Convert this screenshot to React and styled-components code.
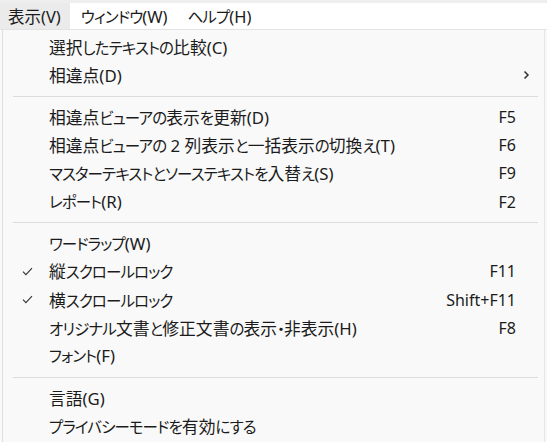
import React from 'react';
import styled, { createGlobalStyle } from 'styled-components';

const GlobalStyle = createGlobalStyle`
  html, body {
    margin: 0;
    padding: 0;
    background: #f9f9f9;
  }
  body {
    font-family: "Noto Sans", "Noto Sans CJK JP", sans-serif;
    color: #1b1b1b;
    overflow: hidden;
  }
`;

const MenuBar = styled.div`
  display: flex;
  height: 26px;
  border-top: 3px solid #eeeeee;
  border-bottom: 1px solid #e3e3e3;
  background: #ffffff;
`;

const BarItem = styled.div`
  display: flex;
  align-items: center;
  padding: 0 9px 0 8px;
  margin-right: 3px;
  font-size: 16.5px;
  white-space: nowrap;
  background: ${p => (p.open ? '#ebebeb' : 'transparent')};
`;

const Dropdown = styled.div`
  margin-left: 2px;
  width: 541px;
  height: 420px;
  border-left: 1px solid #dedede;
  border-right: 1px solid #e6e6e6;
  background: #f9f9f9;
  padding-top: 3px;
`;

const Row = styled.div`
  display: grid;
  grid-template-columns: 46px 1fr auto 28px;
  align-items: center;
  height: 28.2px;
  font-size: 16.8px;
`;

const Check = styled.div`
  display: flex;
  justify-content: center;
  padding-left: 2px;
`;

const Label = styled.span`
  white-space: nowrap;
`;

/* kana runs are set narrower than kanji, like the UI font of the menu */
const Kana = styled.span`
  font-size: 15.5px;
  font-feature-settings: "palt";
  letter-spacing: -0.9px;
`;

const Shortcut = styled.span`
  text-align: right;
  white-space: nowrap;
  font-size: 16px;
`;

const Arrow = styled.div`
  display: flex;
  align-items: center;
  padding-left: 7px;
`;

const Separator = styled.div`
  height: 1px;
  margin: 6.5px 6px 6px 10px;
  background: #dcdcdc;
`;

const CheckMark = () => (
  <svg width="11" height="9" viewBox="0 0 11 9">
    <path d="M1 4.6 L3.9 7.6 L10 1.2" fill="none" stroke="#333" strokeWidth="1.1" />
  </svg>
);

const Chevron = () => (
  <svg width="7" height="10" viewBox="0 0 7 10">
    <path d="M1.5 1.5 L5 5 L1.5 8.5" fill="none" stroke="#333" strokeWidth="1.5" />
  </svg>
);

const Text = ({ children }) =>
  children
    .split(/([\u3040-\u30ff]+)/)
    .map((part, i) => (i % 2 ? <Kana key={i}>{part}</Kana> : part));

const groups = [
  [
    { label: '選択したテキストの比較(C)' },
    { label: '相違点(D)', sub: true },
  ],
  [
    { label: '相違点ビューアの表示を更新(D)', key: 'F5' },
    { label: '相違点ビューアの 2 列表示と一括表示の切換え(T)', key: 'F6' },
    { label: 'マスターテキストとソーステキストを入替え(S)', key: 'F9' },
    { label: 'レポート(R)', key: 'F2' },
  ],
  [
    { label: 'ワードラップ(W)' },
    { label: '縦スクロールロック', key: 'F11', checked: true },
    { label: '横スクロールロック', key: 'Shift+F11', checked: true },
    { label: 'オリジナル文書と修正文書の表示・非表示(H)', key: 'F8' },
    { label: 'フォント(F)' },
  ],
  [
    { label: '言語(G)' },
    { label: 'プライバシーモードを有効にする' },
  ],
];

export default function App() {
  return (
    <>
      <GlobalStyle />
      <MenuBar>
        <BarItem open><Text>表示(V)</Text></BarItem>
        <BarItem><Text>ウィンドウ(W)</Text></BarItem>
        <BarItem><Text>ヘルプ(H)</Text></BarItem>
      </MenuBar>
      <Dropdown>
        {groups.map((items, gi) => (
          <React.Fragment key={gi}>
            {gi > 0 && <Separator />}
            {items.map(item => (
              <Row key={item.label}>
                <Check>{item.checked && <CheckMark />}</Check>
                <Label><Text>{item.label}</Text></Label>
                <Shortcut>{item.key}</Shortcut>
                <Arrow>{item.sub && <Chevron />}</Arrow>
              </Row>
            ))}
          </React.Fragment>
        ))}
      </Dropdown>
    </>
  );
}
